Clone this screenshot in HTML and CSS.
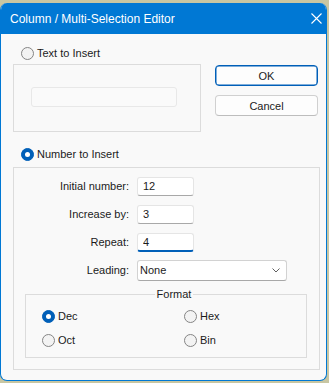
FILE: index.html
```html
<!DOCTYPE html>
<html lang="en">
<head>
    <meta charset="UTF-8">
    <meta name="viewport" content="width=device-width, initial-scale=1.0">
    <title>Column / Multi-Selection Editor</title>
    <link rel="stylesheet" href="styles.css">
</head>
<body>
    <div class="window">
        <div class="titlebar">
            <span>Column / Multi-Selection Editor</span>
            <svg class="close" width="11" height="11" viewBox="0 0 11 11">
                <path d="M0.5 0.5 L10.5 10.5 M10.5 0.5 L0.5 10.5" stroke="#fff" stroke-width="1.1" fill="none"/>
            </svg>
        </div>
        <div class="content">
            <div class="top">
                <div class="text-part">
                    <label class="radio radio-text"><span class="dot"></span>Text to Insert</label>
                    <div class="group group-text">
                        <div class="text-field"></div>
                    </div>
                </div>
                <div class="actions">
                    <button class="btn btn-ok">OK</button>
                    <button class="btn">Cancel</button>
                </div>
            </div>

            <label class="radio radio-number"><span class="dot checked"></span>Number to Insert</label>
            <div class="group group-number">
                <div class="fields">
                    <label>Initial number:</label>
                    <input type="text" value="12">
                    <label>Increase by:</label>
                    <input type="text" value="3">
                    <label>Repeat:</label>
                    <input type="text" class="focused" value="4">
                    <label>Leading:</label>
                    <div class="select-wrap">
                        <select><option>None</option></select>
                        <svg class="chevron" width="8" height="5" viewBox="0 0 8 5">
                            <path d="M0.5 0.5 L4 4 L7.5 0.5" stroke="#606060" stroke-width="1" fill="none"/>
                        </svg>
                    </div>
                </div>

                <fieldset class="format">
                    <legend>Format</legend>
                    <label class="radio"><span class="dot checked"></span>Dec</label>
                    <label class="radio"><span class="dot"></span>Hex</label>
                    <label class="radio"><span class="dot"></span>Oct</label>
                    <label class="radio"><span class="dot"></span>Bin</label>
                </fieldset>
            </div>
        </div>
    </div>
</body>
</html>
```

FILE: styles.css
```css
body {
    margin: 0;
    background-color: #c8c6a2;
    font-family: "Liberation Sans", Arial, sans-serif;
    font-size: 11px;
    color: #1b1b1b;
}
.window {
    margin-top: 3px;
    width: 325px;
    height: 377px;
    border: 1px solid #0078d4;
    border-top: none;
    border-radius: 7px;
    overflow: hidden;
    background-color: #f9f9f9;
}
.titlebar {
    height: 31px;
    background-color: #0078d4;
    color: #fff;
    font-size: 12px;
    display: flex;
    align-items: center;
    justify-content: space-between;
    padding: 0 4px 0 9px;
}
.close {
    display: block;
}
.content {
    padding: 12px 0 0 12px;
}
.top {
    display: flex;
}
.text-part {
    width: 188px;
}
.radio {
    display: flex;
    align-items: center;
    gap: 3px;
    height: 14px;
}
.radio-text,
.radio-number {
    margin-left: 8px;
}
.radio-text {
    margin-bottom: 4px;
}
.radio-number {
    margin-top: 15px;
    margin-bottom: 6px;
}
.dot {
    width: 13px;
    height: 13px;
    box-sizing: border-box;
    border: 1px solid #858585;
    border-radius: 50%;
    background-color: #f3f3f3;
    display: flex;
    align-items: center;
    justify-content: center;
}
.dot.checked {
    background-color: #005fb8;
    border-color: #005fb8;
}
.dot.checked::after {
    content: "";
    width: 5px;
    height: 5px;
    border-radius: 50%;
    background-color: #fff;
}
.group {
    border: 1px solid #dcdcdc;
    box-sizing: border-box;
}
.group-text {
    height: 68px;
    padding: 22px 0 0 17px;
}
.text-field {
    width: 146px;
    height: 20px;
    box-sizing: border-box;
    border: 1px solid #e8e8e8;
    border-radius: 3px;
    background-color: #fafafa;
}
.actions {
    margin-left: 14px;
    padding-top: 19px;
    display: flex;
    flex-direction: column;
    gap: 9px;
}
.btn {
    width: 103px;
    height: 21px;
    box-sizing: border-box;
    background-color: #fdfdfd;
    border: 1px solid #d0d0d0;
    border-bottom-color: #bdbdbd;
    border-radius: 4px;
    font-family: "Liberation Sans", Arial, sans-serif;
    font-size: 11px;
    color: #1b1b1b;
    padding: 0;
}
.btn-ok {
    border: 1px solid #005fb8;
    box-shadow: inset 0 0 0 0.5px #005fb8;
}
.group-number {
    width: 307px;
    height: 203px;
    padding-top: 4px;
}
.fields {
    display: grid;
    grid-template-columns: 115px auto;
    column-gap: 8px;
    grid-auto-rows: 28px;
    align-items: center;
    justify-items: start;
}
.fields label {
    justify-self: end;
}
.fields input {
    width: 57px;
    height: 19px;
    box-sizing: border-box;
    border: 1px solid #e5e5e5;
    border-bottom-color: #a8a8a8;
    border-radius: 3px;
    background-color: #fff;
    padding: 0 5px;
    font-family: "Liberation Sans", Arial, sans-serif;
    font-size: 11px;
    color: #1b1b1b;
    outline: none;
}
.fields input.focused {
    border-bottom: 2px solid #005fb8;
}
.select-wrap {
    position: relative;
}
.select-wrap select {
    appearance: none;
    width: 150px;
    height: 21px;
    box-sizing: border-box;
    border: 1px solid #d2d2d2;
    border-bottom-color: #a8a8a8;
    border-radius: 3px;
    background-color: #fff;
    padding: 0 2px;
    font-family: "Liberation Sans", Arial, sans-serif;
    font-size: 11px;
    color: #1b1b1b;
}
.chevron {
    position: absolute;
    right: 7px;
    top: 8px;
}
.format {
    margin: 4px 0 0 11px;
    width: 282px;
    box-sizing: border-box;
    border: 1px solid #dcdcdc;
    padding: 3px 0 5px 16px;
    display: grid;
    grid-template-columns: 142px auto;
    grid-auto-rows: 24px;
    align-items: center;
}
.format legend {
    margin: 0 auto;
    padding: 0 2px;
    line-height: 13px;
}
```
